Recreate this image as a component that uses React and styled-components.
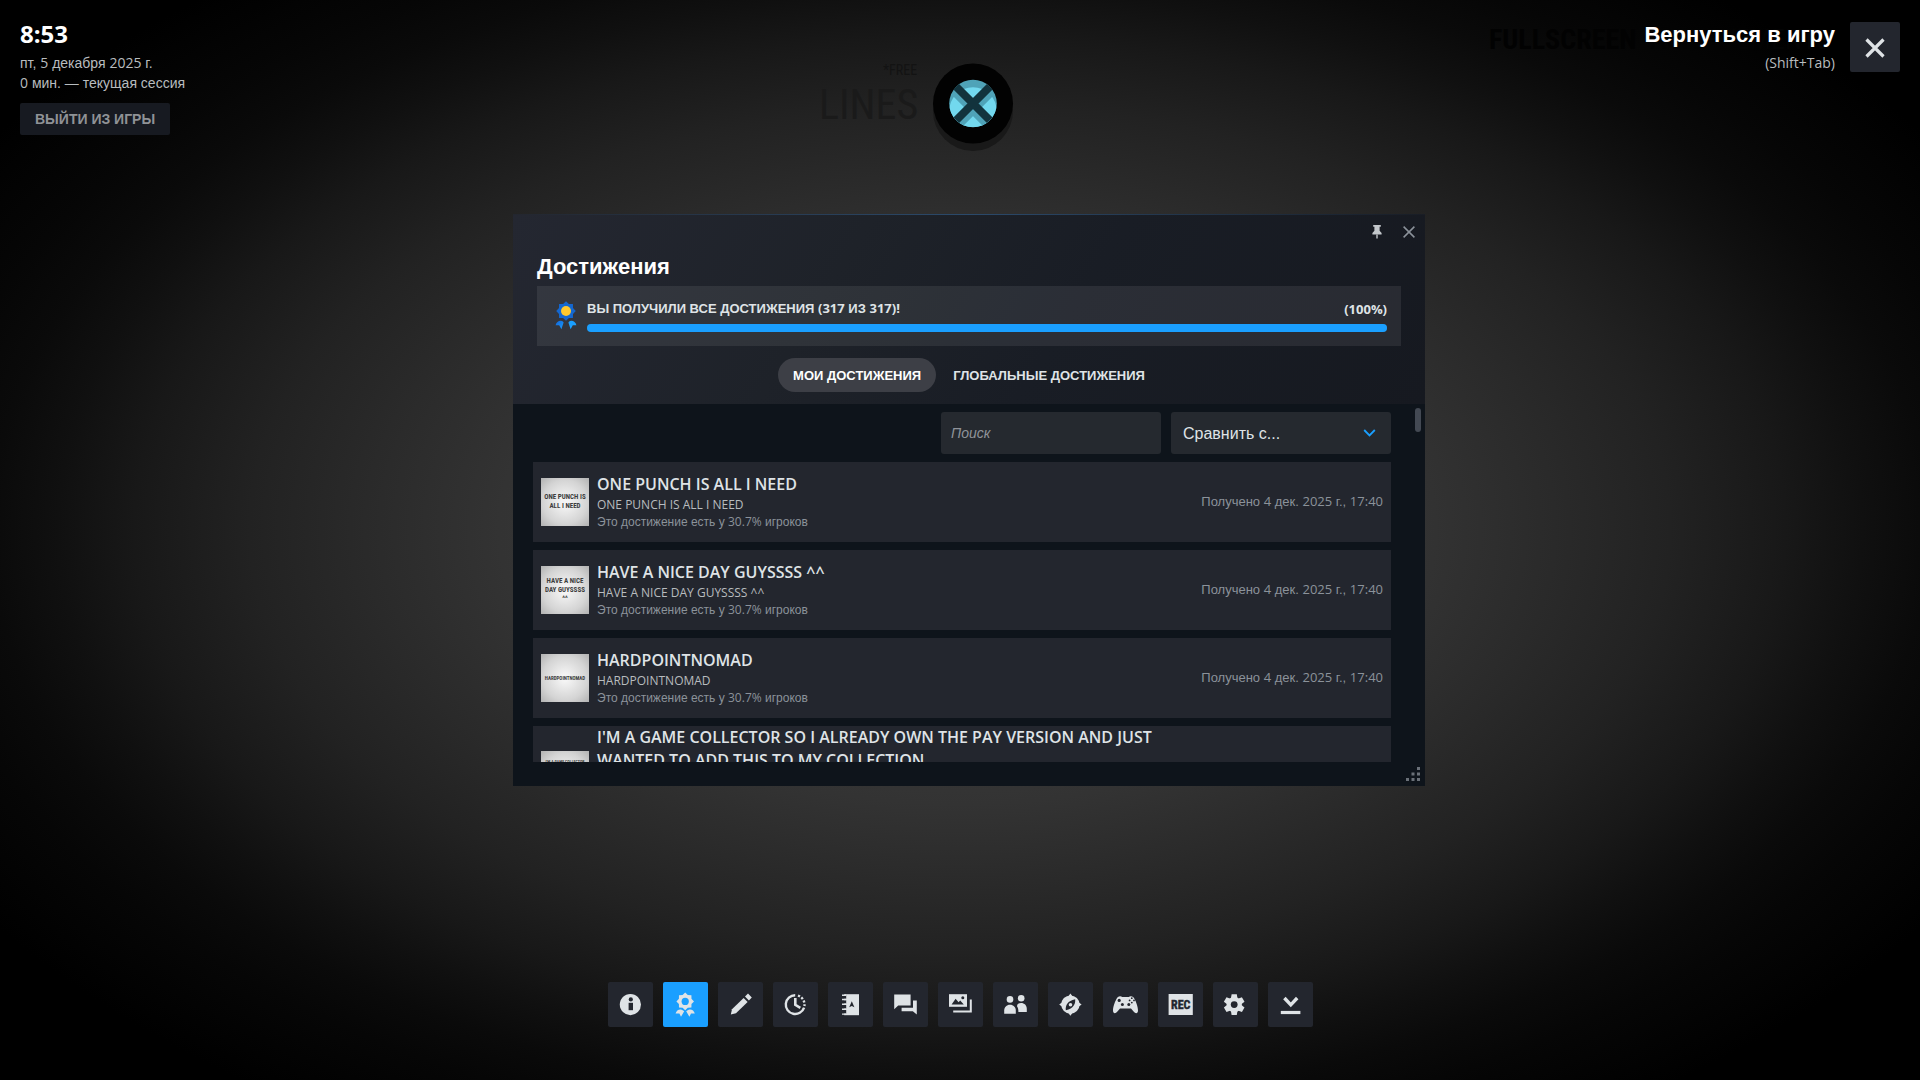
import { useState } from 'react';
import styled, { createGlobalStyle } from 'styled-components';

const GlobalStyle = createGlobalStyle`
  * {
    box-sizing: border-box;
  }

  body {
    margin: 0;
    background: #000;
    color: #dfe3e6;
    font-family: "Liberation Sans", Arial, sans-serif;
    font-size: 14px;
    overflow: hidden;
  }

  button, input, select {
    font-family: inherit;
  }

  h1, h2, h3, p, ul {
    margin: 0;
    padding: 0;
  }
`;

const Overlay = styled.div`
  position: relative;
  display: flex;
  flex-direction: column;
  justify-content: space-between;
  min-height: 100vh;
  background: radial-gradient(
    ellipse 50% 53% at 50% 49%,
    #404040 0%,
    #3a3a3a 32%,
    #333333 48%,
    #2a2a2a 62%,
    #222222 74%,
    #181818 86%,
    #101010 94%,
    #0a0a0a 101%,
    #060606 108%,
    #000 122%
  );
`;

/* latin letters and digits come from another face than the cyrillic ones */
const Latin = styled.span`
  font-family: "Open Sans", sans-serif;
  line-height: 1;
`;

/* ---------- game behind the overlay ---------- */

const GameWord = styled.span`
  position: absolute;
  left: ${props => props.$x}px;
  top: ${props => props.$y}px;
  color: ${props => props.$color};
  font-family: "Roboto Condensed", "Liberation Sans Narrow", "DejaVu Sans Condensed", sans-serif;
  font-size: ${props => props.$size}px;
  font-weight: ${props => props.$weight || 400};
  line-height: 1;
  white-space: nowrap;
`;

const GameLogo = styled.svg`
  position: absolute;
  left: 930px;
  top: 60px;
  width: 86px;
  height: 96px;
`;

/* ---------- top bar ---------- */

const TopBar = styled.header`
  position: relative;
  display: flex;
  justify-content: space-between;
  align-items: flex-start;
  padding: 20px 20px 0;
`;

const Session = styled.div`
  display: flex;
  flex-direction: column;
  align-items: flex-start;
`;

const Clock = styled.h1`
  font-family: "Open Sans", sans-serif;
  font-size: 24px;
  font-weight: 700;
  line-height: 28px;
  color: #fff;
  margin-bottom: 5px;
`;

const SmallLine = styled.p`
  font-size: 14px;
  line-height: 20px;
  color: #b8bcbf;
`;

const ExitButton = styled.button`
  height: 32px;
  margin-top: 10px;
  padding: 0 15px;
  border: none;
  border-radius: 2px;
  background: #171a21;
  color: #8f9296;
  font-size: 14px;
  font-weight: 700;
`;

const Return = styled.div`
  display: flex;
  gap: 15px;
`;

const ReturnText = styled.div`
  text-align: right;
`;

const ReturnTitle = styled.h2`
  font-size: 22px;
  font-weight: 700;
  line-height: 30px;
  color: #fff;
  margin-bottom: 3px;
`;

const CloseOverlay = styled.button`
  display: grid;
  place-items: center;
  width: 50px;
  height: 50px;
  margin-top: 2px;
  padding: 2px 0 0;
  border: none;
  border-radius: 2px;
  background: #23262e;
`;

/* ---------- achievements window ---------- */

const Window = styled.section`
  position: absolute;
  left: 513px;
  top: 214px;
  width: 912px;
  height: 572px;
  display: flex;
  flex-direction: column;
  background: #0e141b;
`;

const WindowHead = styled.div`
  padding: 0 24px 12px;
  border-top: 1px solid;
  border-image: linear-gradient(90deg, #23262e, #2b4a6b 50%, #191d25) 1;
  background: linear-gradient(122deg, #242731 0%, #1e2229 35%, #191d25 60%, #161920 100%);
`;

const WindowControls = styled.div`
  display: flex;
  justify-content: flex-end;
  gap: 12px;
  height: 32px;
  margin-right: -18px;
`;

const ControlButton = styled.button`
  display: grid;
  place-items: center;
  width: 20px;
  height: 34px;
  padding: 0;
  border: none;
  background: none;
`;

const WindowTitle = styled.h2`
  font-size: 22px;
  font-weight: 700;
  line-height: 39px;
  color: #fff;
`;

const Progress = styled.div`
  display: flex;
  align-items: center;
  height: 60px;
  padding: 0 14px 0 16px;
  background: rgba(255, 255, 255, 0.08);
`;

const ProgressBody = styled.div`
  flex: 1;
  margin-left: 10px;
`;

const ProgressText = styled.div`
  display: flex;
  justify-content: space-between;
  align-items: center;
  height: 18px;
  font-size: 13px;
  font-weight: 700;
  line-height: 18px;
  color: #dfe3e6;
`;

const ProgressTrack = styled.div`
  height: 8px;
  margin-top: 6px;
  border-radius: 4px;
  background: #3d4450;
`;

const ProgressFill = styled.div`
  height: 100%;
  border-radius: 4px;
  background: #1a9fff;
`;

const Tabs = styled.div`
  display: flex;
  justify-content: center;
  gap: 2px;
  margin-top: 12px;
`;

const Tab = styled.button`
  height: 34px;
  padding: 0 15px;
  border: none;
  border-radius: 17px;
  background: ${props => (props.$active ? '#3d3f46' : 'transparent')};
  color: ${props => (props.$active ? '#fff' : '#dfe3e6')};
  font-size: 13px;
  font-weight: 700;
`;

const WindowBody = styled.div`
  position: relative;
  flex: 1;
  min-height: 0;
  padding: 8px 34px 24px 20px;
  display: flex;
  flex-direction: column;
`;

const ScrollThumb = styled.div`
  position: absolute;
  top: 4px;
  right: 4px;
  width: 6px;
  height: 24px;
  border-radius: 3px;
  background: #434953;
`;

const ResizeGrip = styled.svg`
  position: absolute;
  right: 4px;
  bottom: 4px;
  width: 15px;
  height: 15px;
`;

const Filters = styled.div`
  display: flex;
  justify-content: flex-end;
  gap: 10px;
  margin-bottom: 8px;
`;

const SearchInput = styled.input`
  width: 220px;
  height: 42px;
  padding: 0 10px;
  border: none;
  border-radius: 3px;
  background: #25292f;
  color: #dfe3e6;
  font-size: 14px;

  &::placeholder {
    color: #8f9399;
    font-style: italic;
    opacity: 1;
  }
`;

const SelectBox = styled.div`
  position: relative;
  width: 220px;
`;

const CompareSelect = styled.select`
  appearance: none;
  width: 100%;
  height: 42px;
  padding: 0 12px;
  border: none;
  border-radius: 3px;
  background: #25292f;
  color: #dfe3e6;
  font-size: 16px;
`;

const SelectArrow = styled.svg`
  position: absolute;
  right: 15px;
  top: 16px;
  width: 13px;
  height: 10px;
  pointer-events: none;
`;

const List = styled.ul`
  display: flex;
  flex-direction: column;
  gap: 8px;
  flex: 1;
  min-height: 0;
  overflow: hidden;
  list-style: none;
`;

const Row = styled.li`
  display: flex;
  flex-shrink: 0;
  align-items: center;
  gap: 8px;
  min-height: 80px;
  padding: 0 8px;
  background: #23262e;
`;

const Thumb = styled.div`
  display: flex;
  flex-direction: column;
  justify-content: center;
  flex-shrink: 0;
  width: 48px;
  height: 48px;
  background: radial-gradient(circle, #f4f4f4 10%, #d4d4d4 65%, #b2b2b2 100%);
  color: #3c3c3c;
  font-family: "Roboto Condensed", "Liberation Mono", monospace;
  font-size: ${props => props.$size}px;
  font-weight: 700;
  line-height: 9px;
  text-align: center;
  white-space: nowrap;
`;

const RowText = styled.div`
  width: 580px;
  font-family: "Open Sans", sans-serif;
`;

const RowTitle = styled.h3`
  font-size: 16px;
  font-weight: 600;
  line-height: 23px;
  color: #dfe3e6;
`;

const RowSub = styled.p`
  font-size: 12px;
  line-height: 17px;
  color: #b8bcbf;
`;

const RowRate = styled.p`
  font-family: "Liberation Sans", Arial, sans-serif;
  font-size: 12px;
  line-height: 18px;
  color: #8b929a;
`;

const RowDate = styled.p`
  margin-left: auto;
  font-size: 13px;
  line-height: 18px;
  color: #8b929a;
`;

/* ---------- bottom dock ---------- */

const Dock = styled.nav`
  display: flex;
  justify-content: center;
  gap: 10px;
  padding-bottom: 53px;
`;

const DockButton = styled.button`
  width: 45px;
  height: 45px;
  padding: 0;
  border: none;
  border-radius: 2px;
  background: ${props => (props.$active ? '#1a9fff' : '#23262e')};
  color: #dfe3e6;

  svg {
    display: block;
    width: 45px;
    height: 45px;
  }
`;

const star = (cx, cy, outer, inner, teeth) => {
  const pts = [];
  for (let i = 0; i < teeth * 2; i++) {
    const r = i % 2 ? inner : outer;
    const a = (Math.PI * i) / teeth - Math.PI / 2;
    pts.push(`${(cx + r * Math.cos(a)).toFixed(2)},${(cy + r * Math.sin(a)).toFixed(2)}`);
  }
  return pts.join(' ');
};

const BG = '#23262e';

const icons = {
  info: (
    <>
      <circle cx="22.4" cy="22.6" r="10.6" fill="currentColor" />
      <circle cx="22.8" cy="17.4" r="2.1" fill={BG} />
      <path d="M20.6 20.8h4.4v7.4h-4.4z" fill={BG} />
    </>
  ),
  achievements: (
    <>
      <polygon points={star(22.2, 19.4, 8.8, 6.8, 8)} fill="currentColor" />
      <circle cx="22.2" cy="19.4" r="3.6" fill="#1a9fff" />
      <path d="M12.6 31.5c.6-2.6 2.6-4.2 5-4.1 1.5.2 2.8 1 3.6 1.8L18 34.8l-1.6-3.2z" fill="currentColor" />
      <path d="M31.8 31.5c-.6-2.6-2.6-4.2-5-4.1-1.5.2-2.8 1-3.6 1.8l3.2 5.6 1.6-3.2z" fill="currentColor" />
    </>
  ),
  pencil: (
    <>
      <path d="M12.8 32.4l1.2-5.2L25.6 16l4 4L18 31.2z" fill="currentColor" />
      <path d="M27 14.6l3-3 3.8 4-2.9 2.9z" fill="currentColor" />
    </>
  ),
  clock: (
    <>
      <path d="M22.2 13.2a9.4 9.4 0 1 0 8.9 12.4" fill="none" stroke="currentColor" strokeWidth="2.4" />
      <path d="M25 13.6a9.4 9.4 0 0 1 6.4 10.4" fill="none" stroke="currentColor" strokeWidth="2.4" strokeDasharray="2.2 1.6" />
      <path d="M22.3 16v6.8l5 3" fill="none" stroke="currentColor" strokeWidth="2.6" />
    </>
  ),
  notes: (
    <>
      <path d="M16.2 12.2H31v21H16.2z" fill="currentColor" />
      <path d="M13.8 15h4.4M13.8 19.9h4.4M13.8 24.8h4.4M13.8 29.7h4.4" stroke={BG} strokeWidth="3.4" />
      <path d="M14 13.2h4M14 17.5h4M14 22.3h4M14 27.2h4M14 32.1h4" stroke="currentColor" strokeWidth="1.4" />
      <path d="M23.8 19.2l2.6 6-2.6-1.2-2.6 1.2z" fill={BG} />
    </>
  ),
  chat: (
    <>
      <path d="M11.2 12.4h16.4v11.2H15.2l-4 3.6z" fill="currentColor" />
      <path d="M30 18.4h3.8V32.4l-4-3.2H18.6v-3.4H30z" fill="currentColor" />
    </>
  ),
  media: (
    <>
      <path d="M11 12.2h18v12.6H11z" fill="currentColor" />
      <path d="M13.6 22.4l4-5.6 3 3.4 1.6-1.6 3.6 3.8z" fill={BG} />
      <circle cx="24.8" cy="15.8" r="1.5" fill={BG} />
      <path d="M32.8 17.4v12H15.2" fill="none" stroke="currentColor" strokeWidth="2" />
    </>
  ),
  friends: (
    <>
      <circle cx="17" cy="17.4" r="3.3" fill="currentColor" />
      <path d="M11.2 31.8v-3.2c0-3.4 2.4-5.8 5.8-5.8s5.8 2.4 5.8 5.8v3.2z" fill="currentColor" />
      <circle cx="28.2" cy="16.2" r="3.3" fill="currentColor" />
      <path d="M24 24.2c0-2 1.8-3.2 4-3.2 3.4 0 5.8 2.4 5.8 5.8V30h-8.4c0-2.4-.3-4.2-1.4-5.8z" fill="currentColor" />
    </>
  ),
  compass: (
    <>
      <circle cx="22.4" cy="22.6" r="9.2" fill="currentColor" />
      <path d="M22.4 11.4l3 4h-6zM22.4 33.8l3-4h-6zM11.2 22.6l4-3v6zM33.6 22.6l-4-3v6z" fill="currentColor" />
      <path d="M27.2 17.2c.4 4.6-1.6 9.4-9.4 11-.6-4.8 1.8-9.6 9.4-11z" fill={BG} />
      <circle cx="22.5" cy="22.7" r="1.8" fill="currentColor" />
    </>
  ),
  gamepad: (
    <>
      <path d="M14.6 15.2c1.6-1.2 3.4-1.2 4.6-.2h6.6c1.2-1 3-1 4.6.2 2.4 3.2 4.6 9.4 4.6 13.4 0 3.2-2.6 3.2-4.2 1.2l-2.8-3.4H17l-2.8 3.4c-1.6 2-4.2 2-4.2-1.2 0-4 2.2-10.2 4.6-13.4z" fill="currentColor" />
      <circle cx="16.2" cy="18.4" r="1.6" fill={BG} />
      <circle cx="19.4" cy="22.6" r="1.5" fill={BG} />
      <circle cx="25.8" cy="22.6" r="1.5" fill={BG} />
      <circle cx="28.8" cy="16.2" r=".9" fill={BG} />
      <circle cx="26.6" cy="18.4" r=".9" fill={BG} />
      <circle cx="31" cy="18.4" r=".9" fill={BG} />
      <circle cx="28.8" cy="20.6" r=".9" fill={BG} />
    </>
  ),
  rec: (
    <>
      <path d="M10.6 12h24.2v21H10.6z" fill="currentColor" />
      <text
        x="22.7"
        y="27"
        textAnchor="middle"
        fill={BG}
        stroke={BG}
        strokeWidth=".4"
        fontFamily='"Roboto Condensed", "Liberation Sans Narrow", "DejaVu Sans Condensed", sans-serif'
        fontSize="12"
        fontWeight="700"
      >
        REC
      </text>
    </>
  ),
  settings: (
    <>
      <circle cx="21.2" cy="22.6" r="7.6" fill="currentColor" />
      {[0, 60, 120, 180, 240, 300].map(a => (
        <path key={a} d="M18.6 12.2h5.2l.8 5h-6.8z" fill="currentColor" transform={`rotate(${a} 21.2 22.6)`} />
      ))}
      <circle cx="21.2" cy="22.6" r="3.4" fill={BG} />
    </>
  ),
  collapse: (
    <>
      <path d="M16.4 16l6.4 6.8 6.4-6.8" fill="none" stroke="currentColor" strokeWidth="3.4" />
      <path d="M12.8 30.5h19.6" stroke="currentColor" strokeWidth="3.2" />
    </>
  ),
};

const dockItems = [
  ['info', 'Обзор игры'],
  ['achievements', 'Достижения'],
  ['pencil', 'Заметки'],
  ['clock', 'Недавнее'],
  ['notes', 'Руководства'],
  ['chat', 'Обсуждения'],
  ['media', 'Скриншоты'],
  ['friends', 'Друзья'],
  ['compass', 'Браузер'],
  ['gamepad', 'Контроллер'],
  ['rec', 'Запись'],
  ['settings', 'Настройки'],
  ['collapse', 'Свернуть'],
];

const achievements = [
  { title: 'ONE PUNCH IS ALL I NEED', lines: ['ONE PUNCH IS', 'ALL I NEED'], size: 7 },
  { title: 'HAVE A NICE DAY GUYSSSS ^^', lines: ['HAVE A NICE', 'DAY GUYSSSS', '^^'], size: 7 },
  { title: 'HARDPOINTNOMAD', lines: ['HARDPOINTNOMAD'], size: 5 },
  {
    title: "I'M A GAME COLLECTOR SO I ALREADY OWN THE PAY VERSION AND JUST WANTED TO ADD THIS TO MY COLLECTION",
    lines: ["I'M A GAME COLLECTOR", 'SO I ALREADY OWN THE', 'PAY VERSION AND JUST', 'WANTED TO ADD THIS'],
    size: 4,
  },
];

const Achievement = ({ item }) => (
  <Row>
    <Thumb $size={item.size}>
      {item.lines.map(line => (
        <span key={line}>{line}</span>
      ))}
    </Thumb>
    <RowText>
      <RowTitle>{item.title}</RowTitle>
      <RowSub>{item.title}</RowSub>
      <RowRate>
        Это достижение есть у <Latin>30.7%</Latin> игроков
      </RowRate>
    </RowText>
    <RowDate>
      Получено <Latin>4</Latin> дек. <Latin>2025</Latin> г., <Latin>17:40</Latin>
    </RowDate>
  </Row>
);

const App = () => {
  const [tab, setTab] = useState('mine');
  const [search, setSearch] = useState('');
  const percent = 100;

  return (
    <>
      <GlobalStyle />
      <Overlay>
        <GameWord $x={1489} $y={26} $size={28} $weight={700} $color="#020202">FULLSCREEN</GameWord>
        <GameWord $x={1650} $y={26} $size={28} $color="#030303">ACHIEVEMENTS</GameWord>
        <GameWord $x={883} $y={63} $size={14} $color="#131313">*FREE</GameWord>
        <GameWord $x={819} $y={84} $size={42} $color="#1a1a1a">LINES</GameWord>
        <GameLogo viewBox="0 0 86 96">
          <circle cx="43" cy="51" r="40" fill="#191919" />
          <circle cx="43" cy="43.5" r="40" fill="#020202" />
          <clipPath id="disc">
            <circle cx="43" cy="43.5" r="23.8" />
          </clipPath>
          <g clipPath="url(#disc)">
            <path d="M19 19h48v48H19z" fill="#4fa3b8" />
            <circle cx="43" cy="51" r="23.8" fill="#72d8ee" />
            <path d="M24 31.5l38 38M62 31.5l-38 38" stroke="#4fa3b8" strokeWidth="8" />
            <path d="M23 23.5l40 40M63 23.5l-40 40" stroke="#12333d" strokeWidth="8" />
          </g>
        </GameLogo>

        <TopBar>
          <Session>
            <Clock>8:53</Clock>
            <SmallLine>
              пт, <Latin>5</Latin> декабря <Latin>2025</Latin> г.
            </SmallLine>
            <SmallLine>
              <Latin>0</Latin> мин. — текущая сессия
            </SmallLine>
            <ExitButton type="button">ВЫЙТИ ИЗ ИГРЫ</ExitButton>
          </Session>
          <Return>
            <ReturnText>
              <ReturnTitle>Вернуться в игру</ReturnTitle>
              <SmallLine>
                <Latin>(Shift+Tab)</Latin>
              </SmallLine>
            </ReturnText>
            <CloseOverlay type="button" aria-label="Закрыть">
              <svg width="20" height="20" viewBox="0 0 20 20">
                <path d="M1.5 1.5l17 17M18.5 1.5l-17 17" stroke="#dfe3e6" strokeWidth="3.2" />
              </svg>
            </CloseOverlay>
          </Return>
        </TopBar>

        <Window>
          <WindowHead>
            <WindowControls>
              <ControlButton type="button" aria-label="Закрепить">
                <svg width="10" height="14" viewBox="0 0 10 14">
                  <path d="M1.2 0h7.6v1.8H7.6v4L9.6 8v1.4H.4V8l2-2.2v-4H1.2z" fill="#c3c7cb" />
                  <path d="M4.3 9.4h1.4V13L5 14l-.7-1z" fill="#c3c7cb" />
                </svg>
              </ControlButton>
              <ControlButton type="button" aria-label="Закрыть окно">
                <svg width="12" height="12" viewBox="0 0 12 12">
                  <path d="M.6.6l10.8 10.8M11.4.6L.6 11.4" stroke="#8b929a" strokeWidth="1.5" />
                </svg>
              </ControlButton>
            </WindowControls>
            <WindowTitle>Достижения</WindowTitle>
            <Progress>
              <svg width="24" height="30" viewBox="0 0 24 30">
                <defs>
                  <linearGradient id="ribbon" x1="0" y1="0" x2="1" y2="1">
                    <stop offset="0" stopColor="#1264d8" />
                    <stop offset="1" stopColor="#1a9fff" />
                  </linearGradient>
                </defs>
                <polygon points={star(13, 10, 9.8, 7.6, 8)} fill="#1467cf" />
                <circle cx="13" cy="10" r="5" fill="#ffc82c" />
                <path d="M2.6 24.2c.6-3 3-4.6 5.4-4.4 1.2.2 2 .8 2.6 1.6L8.4 28.2l-2.2-4z" fill="url(#ribbon)" />
                <path d="M23.4 24.2c-.6-3-3-4.6-5.4-4.4-1.2.2-2 .8-2.6 1.6l2.2 6.8 2.2-4z" fill="#1a9fff" />
              </svg>
              <ProgressBody>
                <ProgressText>
                  <span>
                    ВЫ ПОЛУЧИЛИ ВСЕ ДОСТИЖЕНИЯ <Latin>(317</Latin> ИЗ <Latin>317)!</Latin>
                  </span>
                  <Latin>({percent}%)</Latin>
                </ProgressText>
                <ProgressTrack>
                  <ProgressFill style={{ width: `${percent}%` }} />
                </ProgressTrack>
              </ProgressBody>
            </Progress>
            <Tabs>
              <Tab type="button" $active={tab === 'mine'} onClick={() => setTab('mine')}>
                МОИ ДОСТИЖЕНИЯ
              </Tab>
              <Tab type="button" $active={tab === 'global'} onClick={() => setTab('global')}>
                ГЛОБАЛЬНЫЕ ДОСТИЖЕНИЯ
              </Tab>
            </Tabs>
          </WindowHead>
          <WindowBody>
            <Filters>
              <SearchInput
                type="text"
                aria-label="Поиск"
                placeholder="Поиск"
                value={search}
                onChange={e => setSearch(e.target.value)}
              />
              <SelectBox>
                <CompareSelect aria-label="Сравнить с...">
                  <option>Сравнить с...</option>
                </CompareSelect>
                <SelectArrow viewBox="0 0 13 10">
                  <path d="M1.2 2l5.3 5.4L11.8 2" fill="none" stroke="#1a9fff" strokeWidth="1.8" />
                </SelectArrow>
              </SelectBox>
            </Filters>
            <List>
              {achievements.map(item => (
                <Achievement key={item.title} item={item} />
              ))}
            </List>
            <ScrollThumb />
            <ResizeGrip viewBox="0 0 15 15">
              {[[11, 0], [5.5, 5.5], [11, 5.5], [0, 11], [5.5, 11], [11, 11]].map(([x, y]) => (
                <rect key={`${x}-${y}`} x={x} y={y} width="3" height="3" fill="#6a7078" />
              ))}
            </ResizeGrip>
          </WindowBody>
        </Window>

        <Dock>
          {dockItems.map(([name, label]) => (
            <DockButton key={name} type="button" aria-label={label} $active={name === 'achievements'}>
              <svg viewBox="0 0 45 45">{icons[name]}</svg>
            </DockButton>
          ))}
        </Dock>
      </Overlay>
    </>
  );
};

export default App;
